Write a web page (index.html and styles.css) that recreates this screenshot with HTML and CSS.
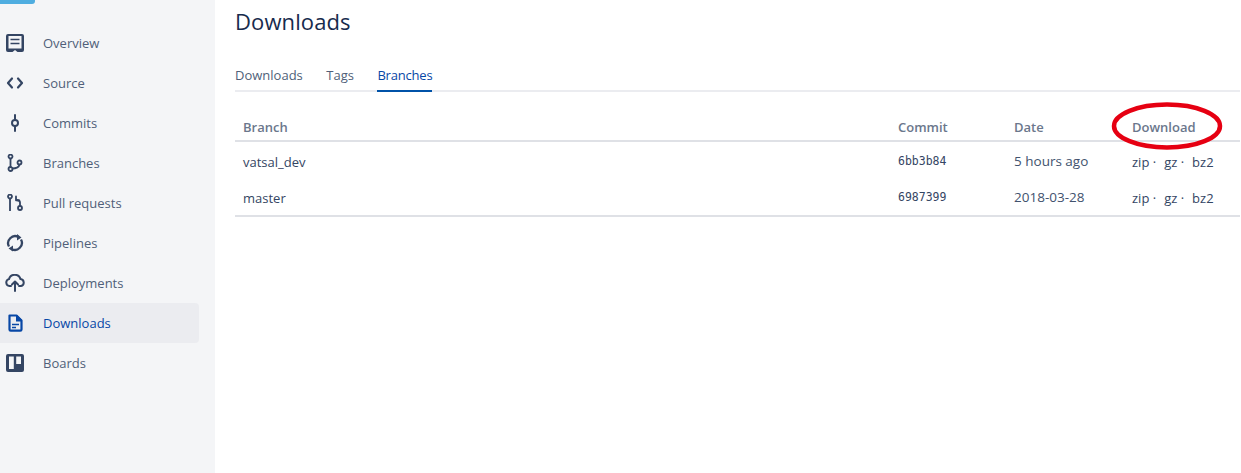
FILE: index.html
```html
<!DOCTYPE html>
<html lang="en">
<head>
<meta charset="utf-8">
<title>Downloads</title>
<link rel="stylesheet" href="styles.css">
</head>
<body>
<div class="app">
  <aside class="sidebar">
    <div class="stub"></div>
    <nav class="nav">
      <a class="nav-item"><svg class="icon" viewBox="0 0 18 18"><path fill="currentColor" fill-rule="evenodd" d="M2 0h14a2 2 0 0 1 2 2v14a2 2 0 0 1-2 2h-4.500L9 16 6.500 18H2a2 2 0 0 1-2-2V2a2 2 0 0 1 2-2zm.500 2v12.500h13V2h-13z"/><path stroke="currentColor" stroke-width="1.700" d="M4.500 5.500h9M4.500 9.500h9"/></svg><span>Overview</span></a>
      <a class="nav-item"><svg class="icon" viewBox="0 0 18 18"><path fill="none" stroke="currentColor" stroke-width="2.200" stroke-linecap="round" stroke-linejoin="round" d="M6 4.500 2 9l4 4.500M12 4.500 16 9l-4 4.500"/></svg><span>Source</span></a>
      <a class="nav-item"><svg class="icon" viewBox="0 0 18 18"><g fill="none" stroke="currentColor" stroke-width="2"><circle cx="9" cy="9" r="3"/><path stroke-linecap="round" d="M9 1V6M9 12v5"/></g></svg><span>Commits</span></a>
      <a class="nav-item"><svg class="icon" viewBox="0 0 18 18"><g fill="none" stroke="currentColor" stroke-width="1.800"><circle cx="4.500" cy="2.500" r="2"/><circle cx="4.500" cy="15" r="2"/><circle cx="13.500" cy="8.500" r="2"/><path d="M4.500 4.500V13M6 14.500c4.500 0 7-1.500 7.500-4"/></g></svg><span>Branches</span></a>
      <a class="nav-item"><svg class="icon" viewBox="0 0 18 18"><g fill="none" stroke="currentColor" stroke-width="1.800"><circle cx="4" cy="2.500" r="2"/><circle cx="14" cy="14" r="2"/><path d="M4 4.500V17M14 12V8.500c0-1.500-1-2.500-3.500-2.500"/><path stroke-linecap="round" stroke-linejoin="round" d="M10 2.500V6.300h3"/></g></svg><span>Pull requests</span></a>
      <a class="nav-item"><svg class="icon" viewBox="0 0 18 18"><g fill="none" stroke="currentColor" stroke-width="2.300"><path d="M3 12.500A7 7 0 0 1 12.500 3"/><path d="M15 5.500A7 7 0 0 1 5.500 15"/></g><path fill="currentColor" d="M11 0l4.500 3.500L11 6.500zM7 11.500v6L2.500 14.500z"/></svg><span>Pipelines</span></a>
      <a class="nav-item"><svg class="icon icon-wide" viewBox="0 0 20 18"><g fill="none" stroke="currentColor" stroke-width="2" stroke-linecap="round" stroke-linejoin="round"><path d="M6 12H4.500a3.500 3.500 0 0 1-.5-6.900 6 6 0 0 1 11.500 0 3.500 3.500 0 0 1 .5 6.900H14"/><path d="M10 17V8M7 10.500 10 7.500l3 3"/></g></svg><span>Deployments</span></a>
      <a class="nav-item active"><svg class="icon" viewBox="0 0 18 18"><path fill="none" stroke="currentColor" stroke-width="2.200" stroke-linejoin="round" d="M3.500 1.500h7l5 5V15.500a1.200 1.200 0 0 1-1.200 1.200H4.700a1.200 1.200 0 0 1-1.200-1.200z"/><path fill="currentColor" d="M10 1h1l5 5v1.500h-6z"/><path stroke="currentColor" stroke-width="1.600" d="M6 10.500h7M6 13.500h4"/></svg><span>Downloads</span></a>
      <a class="nav-item"><svg class="icon" viewBox="0 0 18 18"><path fill="currentColor" fill-rule="evenodd" d="M2 0h14a2 2 0 0 1 2 2v14a2 2 0 0 1-2 2H2a2 2 0 0 1-2-2V2a2 2 0 0 1 2-2zm1 2.500V15h4.800V2.500H3zm7.200 0V10H15V2.500h-4.800z"/></svg><span>Boards</span></a>
    </nav>
  </aside>
  <main class="main">
    <h1 class="title">Downloads</h1>
    <div class="tabs">
      <a class="tab">Downloads</a>
      <a class="tab">Tags</a>
      <a class="tab tab-active">Branches</a>
    </div>
    <div class="table">
      <div class="row head">
        <div>Branch</div><div>Commit</div><div>Date</div><div>Download</div>
      </div>
      <div class="row body-row">
        <div>vatsal_dev</div><div class="hash">6bb3b84</div><div class="date">5 hours ago</div><div class="links"><span>zip ·</span><span>gz ·</span><span>bz2</span></div>
      </div>
      <div class="row body-row last">
        <div>master</div><div class="hash">6987399</div><div class="date">2018-03-28</div><div class="links"><span>zip ·</span><span>gz ·</span><span>bz2</span></div>
      </div>
    </div>
  </main>
</div>
<svg class="oval" width="116" height="52" viewBox="0 0 116 52"><ellipse cx="57" cy="26" rx="53" ry="21.500" fill="none" stroke="#e60012" stroke-width="4.500"/></svg>
</body>
</html>
```
FILE: styles.css
```css
* { box-sizing: border-box; }
html, body { margin: 0; height: 100%; overflow: hidden; background: #fff; }
body { font-family: "Open Sans", "Noto Sans", sans-serif; color: #172b4d; }
.app { display: flex; height: 473px; }
.sidebar { width: 215px; flex: none; background: #f4f5f7; }
.stub { width: 35px; height: 4px; background: #4fade0; border-radius: 0 0 3px 0; }
.nav { display: flex; flex-direction: column; padding-top: 19px; width: 199px; }
.nav-item { display: flex; align-items: center; height: 40px; padding-left: 6px; font-size: 13px; color: #505f79; border-radius: 0 4px 4px 0; }
.nav-item span { margin-left: 19px; }
.icon { width: 18px; height: 18px; flex: none; color: #344563; }
.icon-wide { width: 20px; margin-left: -1px; margin-right: -1px; }
.active { background: #ebecf0; color: #0747a6; }
.active .icon { color: #0747a6; }
.main { flex: 1; padding: 0 1px 0 20px; min-width: 0; }
.title { margin: 7px 0 0; font-size: 22px; line-height: 28px; font-weight: 400; color: #172b4d; letter-spacing: 0.1px; }
.tabs { display: flex; gap: 23.500px; margin-top: 25px; height: 32px; border-bottom: 2px solid #ebecf0; font-size: 13px; color: #505f79; }
.tab { height: 32px; line-height: 30px; }
.tab-active { color: #0747a6; border-bottom: 2px solid #0052a8; letter-spacing: -0.200px; }
.table { margin-top: 21px; }
.row { display: grid; grid-template-columns: 655px 116px 118px 1fr; padding-left: 8px; font-size: 13px; color: #344563; align-items: center; }
.head { height: 29px; border-bottom: 2px solid #dfe1e6; color: #6b778c; font-weight: 600; }
.body-row { height: 38px; padding-top: 1px; }
.last { height: 37px; padding-top: 0; border-bottom: 2px solid #dfe1e6; }
.hash { font-family: "DejaVu Sans Mono", monospace; font-size: 11.500px; margin-top: -2px; }
.date { font-size: 13.500px; margin-top: -2px; color: #42526e; }
.links { display: flex; gap: 8px; }
.oval { position: absolute; left: 1110px; top: 100px; }
```
